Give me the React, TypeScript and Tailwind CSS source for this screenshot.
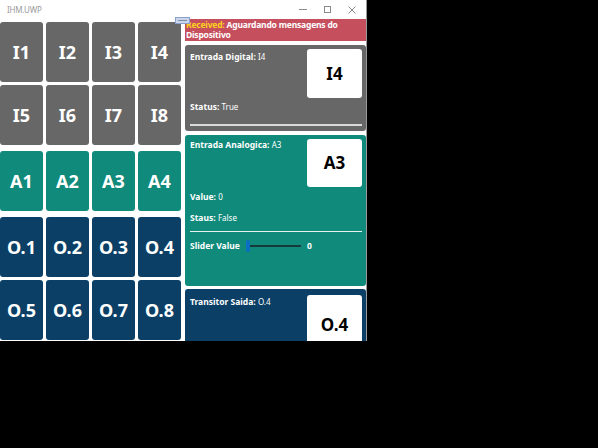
import React from "react";

const font = { fontFamily: '"Noto Sans", "Open Sans", sans-serif' };

const inputs = ["I1", "I2", "I3", "I4", "I5", "I6", "I7", "I8"];
const analogs = ["A1", "A2", "A3", "A4"];
const outputs = ["O.1", "O.2", "O.3", "O.4", "O.5", "O.6", "O.7", "O.8"];

function Tile({ label, color }: { label: string; color: string }) {
  return (
    <div className={`${color} h-[60px] rounded-[3px] flex items-center justify-center text-white font-bold text-[18px]`}>
      {label}
    </div>
  );
}

function Field({ name, value }: { name: string; value: string }) {
  return (
    <div className="text-[8.5px] leading-[12px] text-white">
      <span className="font-bold">{name}: </span>
      <span className="text-[8px]">{value}</span>
    </div>
  );
}

function Badge({ text, h }: { text: string; h: string }) {
  return (
    <div className={`w-[55px] ${h} bg-white rounded-[3px] flex items-center justify-center text-black font-bold text-[17px] shrink-0`}>
      {text}
    </div>
  );
}

export default function App() {
  return (
    <div className="w-[598px] h-[448px] bg-black relative overflow-hidden" style={font}>
      <div className="w-[367px] h-[341px] bg-white flex flex-col border-r border-[#9a9a9a] overflow-hidden">
        {/* title bar */}
        <div className="h-[19px] shrink-0 flex items-center justify-between pl-[7px] pr-[10px]">
          <span className="text-[8px] text-[#9a9a9a] tracking-tight">IHM.UWP</span>
          <div className="flex items-center gap-[17px] text-[#8a8a8a]">
            <div className="w-[8px] h-px bg-[#8a8a8a]" />
            <div className="w-[7px] h-[7px] border border-[#8a8a8a]" />
            <svg width="8" height="8" viewBox="0 0 8 8" stroke="#8a8a8a" strokeWidth="1">
              <path d="M0.5 0.5 L7.5 7.5 M7.5 0.5 L0.5 7.5" />
            </svg>
          </div>
        </div>

        <div className="flex flex-1 min-h-0">
          {/* tile grid */}
          <div className="w-[181px] pt-[3px] flex flex-col gap-[6px] shrink-0">
            <div className="grid grid-cols-4 gap-[3px]">
              {inputs.map((t) => (
                <Tile key={t} label={t} color="bg-[#676767]" />
              ))}
            </div>
            <div className="grid grid-cols-4 gap-[3px]">
              {analogs.map((t) => (
                <Tile key={t} label={t} color="bg-[#0f8a7b]" />
              ))}
            </div>
            <div className="grid grid-cols-4 gap-[3px]">
              {outputs.map((t) => (
                <Tile key={t} label={t} color="bg-[#0b3f66]" />
              ))}
            </div>
          </div>

          {/* detail panel */}
          <div className="ml-[4px] w-[181px] flex flex-col relative">
            <div className="shrink-0 bg-[#c64f5e] h-[22px] pl-[1px] text-[8.5px] leading-[10px] font-bold text-white pt-px tracking-[-0.2px]">
              <div>
                <span className="text-[#ffd21f]">Received:</span> Aguardando mensagens do
              </div>
              <div>Dispositivo</div>
            </div>

            <div className="shrink-0 mt-[4px] h-[86px] bg-[#676767] rounded-[3px] px-[5px] pt-[4px] pr-[4px] flex flex-col">
              <div className="flex justify-between">
                <div className="pt-[2px]">
                  <Field name="Entrada Digital" value="I4" />
                </div>
                <Badge text="I4" h="h-[49px]" />
              </div>
              <div className="mt-[3px]">
                <Field name="Status" value="True" />
              </div>
              <div className="mt-[11px] h-[2px] bg-[#d9d9d9]" />
            </div>

            <div className="shrink-0 mt-[4px] h-[151px] bg-[#0f8a7b] rounded-[3px] px-[5px] pt-[4px] pr-[4px] flex flex-col">
              <div className="flex justify-between">
                <div>
                  <Field name="Entrada Analogica" value="A3" />
                </div>
                <Badge text="A3" h="h-[48px]" />
              </div>
              <div className="mt-[4px]">
                <Field name="Value" value="0" />
              </div>
              <div className="mt-[9px]">
                <Field name="Staus" value="False" />
              </div>
              <div className="mt-[7px] h-px bg-[#e6f3f1]" />
              <div className="mt-[8px] flex items-center text-white text-[8.5px] font-bold">
                <span className="w-[56px]">Slider Value</span>
                <div className="flex items-center w-[55px]">
                  <div className="w-[4px] h-[12px] rounded-[2px] bg-[#0a6fc2]" />
                  <div className="flex-1 h-[2px] bg-[#17393a]" />
                </div>
                <span className="ml-[6px]">0</span>
              </div>
            </div>

            <div className="shrink-0 mt-[3px] h-[80px] bg-[#0b3f66] rounded-[3px] px-[5px] pt-[6px] pr-[4px] flex justify-between">
              <div className="pt-[1px]">
                <Field name="Transitor Saida" value="O.4" />
              </div>
              <Badge text="O.4" h="h-[60px]" />
            </div>

            <div className="absolute left-[-10px] top-[-2px] w-[15px] h-[7px] bg-[#c9d6ec] border border-[#8aa0c8] flex items-center justify-center">
              <div className="w-[9px] h-px bg-[#7d8aa6]" />
            </div>
          </div>
        </div>
      </div>
    </div>
  );
}
